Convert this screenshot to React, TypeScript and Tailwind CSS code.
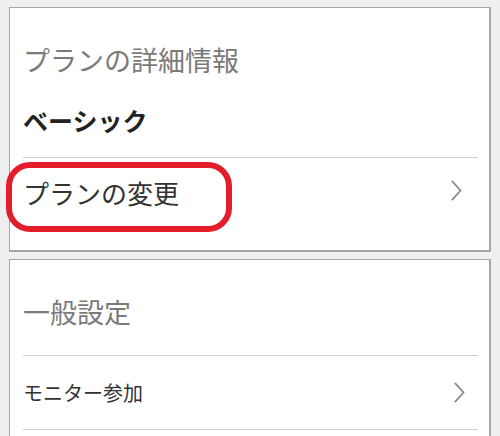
import React from "react";

const Chevron = () => (
  <svg width="11" height="21" viewBox="0 0 11 21" fill="none">
    <polyline points="1.5,1.5 9.5,10.5 1.5,19.5" stroke="#8a8a8a" strokeWidth="1.8" strokeLinecap="square" />
  </svg>
);

export default function App() {
  return (
    <div
      className="relative w-[500px] h-[436px] overflow-hidden bg-[#efefef] pt-[7px] px-[9px]"
      style={{ fontFamily: '"Noto Sans CJK JP", "Noto Sans", sans-serif' }}
    >
      <div className="bg-white border-t border-l border-r-2 border-b-2 border-[#a6a6a6] pl-[13px] pr-[11px]">
        <div className="mt-[32px] leading-[40px] text-[27px] text-[#7a7a7a]">プランの詳細情報</div>
        <div className="mt-[20px] leading-[40px] text-[25px] font-bold text-[#222]">ベーシック</div>
        <div className="mt-[17px] h-px bg-[#cfcfcf]" />
        <div className="flex items-center justify-between h-[70px] mb-[22px]">
          <span className="text-[26px] text-[#333] leading-[40px]">プランの変更</span>
          <span className="mr-[16px] -mt-[6px]"><Chevron /></span>
        </div>
      </div>
      <div className="mt-[7px] bg-white border-t border-l border-r-2 border-b-2 border-[#a6a6a6] pl-[13px] pr-[11px] h-[200px]">
        <div className="mt-[32px] leading-[40px] text-[27px] text-[#7a7a7a]">一般設定</div>
        <div className="mt-[23px] h-px bg-[#cfcfcf]" />
        <div className="flex items-center justify-between h-[73px]">
          <span className="text-[20px] text-[#333] leading-[30px]">モニター参加</span>
          <span className="mr-[13px]"><Chevron /></span>
        </div>
        <div className="h-px bg-[#cfcfcf]" />
      </div>
      <div className="absolute left-[6px] top-[162px] w-[226px] h-[70px] border-[6px] border-[#e31e2a] rounded-[24px]" />
    </div>
  );
}
